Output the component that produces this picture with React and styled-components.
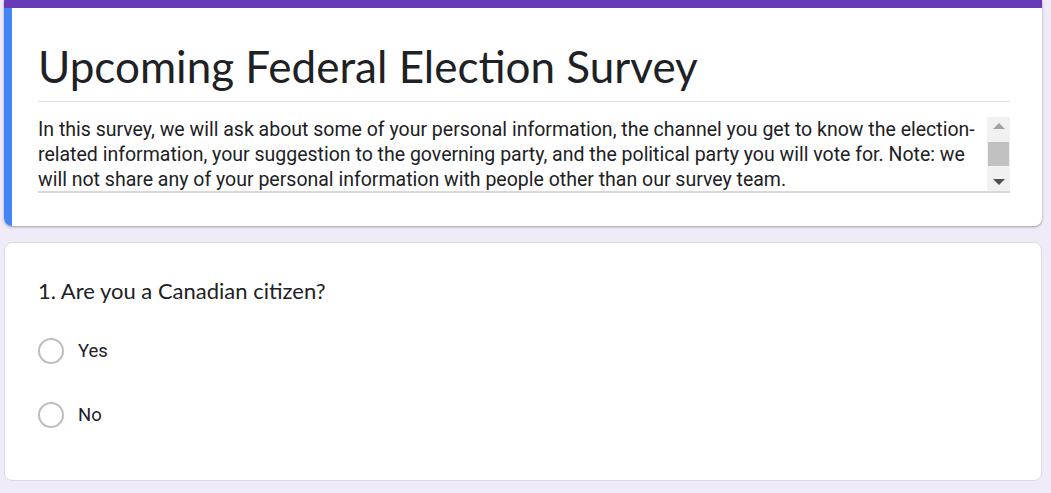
import React from "react";
import styled, { createGlobalStyle } from "styled-components";

const GlobalStyle = createGlobalStyle`
  html, body {
    margin: 0;
    padding: 0;
    background: #f0ebf8;
  }
  body {
    font-family: Roboto, "Liberation Sans", sans-serif;
    color: #202124;
  }
`;

const Page = styled.div`
  width: 1038px;
  padding: 0 0 0 4px;
  display: flex;
  flex-direction: column;
  gap: 16px;
`;

const HeaderCard = styled.div`
  background: #fff;
  border-radius: 0 0 8px 8px;
  border-top: 8px solid #673ab7;
  box-shadow: 0 1px 2px rgba(60, 64, 67, 0.35), 0 1px 3px 1px rgba(60, 64, 67, 0.1);
  display: flex;
  overflow: hidden;
`;

const Accent = styled.div`
  width: 8px;
  background: #4285f4;
  flex-shrink: 0;
`;

const HeaderBody = styled.div`
  flex: 1;
  padding: 30px 32px 33px 26px;
  display: flex;
  flex-direction: column;
`;

const Title = styled.h1`
  margin: 0;
  font-family: Lato, "Open Sans", sans-serif;
  font-weight: 400;
  font-size: 44px;
  line-height: 56px;
  color: #202124;
  padding-bottom: 7px;
  border-bottom: 1px solid #dadce0;
`;

const DescBox = styled.div`
  margin-top: 15px;
  display: flex;
  border-bottom: 2px solid #d9d9d9;
  height: 74px;
  overflow: hidden;
`;

const DescText = styled.p`
  flex: 1;
  margin: 0;
  font-size: 19.5px;
  line-height: 25px;
  color: #202124;
  padding-right: 8px;
`;

const Scrollbar = styled.div`
  width: 23px;
  background: #f1f1f1;
  display: flex;
  flex-direction: column;
  align-items: center;
  justify-content: space-between;
  padding: 6px 0 6px;
`;

const Thumb = styled.div`
  width: 21px;
  height: 24px;
  background: #c1c1c1;
`;

const Arrow = styled.div`
  width: 0;
  height: 0;
  border-left: 6px solid transparent;
  border-right: 6px solid transparent;
  ${(p) =>
    p.down
      ? "border-top: 6px solid #505050;"
      : "border-bottom: 6px solid #a3a3a3;"}
`;

const QuestionCard = styled.div`
  background: #fff;
  border: 1px solid #dadce0;
  border-radius: 8px;
  padding: 35px 33px 52px 33px;
  display: flex;
  flex-direction: column;
`;

const Question = styled.div`
  font-family: Lato, "Open Sans", sans-serif;
  font-size: 22px;
  line-height: 26px;
  color: #202124;
  margin-bottom: 34px;
`;

const Options = styled.div`
  display: flex;
  flex-direction: column;
  gap: 38px;
`;

const Option = styled.label`
  display: flex;
  align-items: center;
  gap: 14px;
  font-size: 18.5px;
  color: #202124;
`;

const Radio = styled.span`
  width: 22px;
  height: 22px;
  border: 2px solid #bdbdbd;
  border-radius: 50%;
`;

export default function App() {
  return (
    <>
      <GlobalStyle />
      <Page>
        <HeaderCard>
          <Accent />
          <HeaderBody>
            <Title>Upcoming Federal Election Survey</Title>
            <DescBox>
              <DescText>
                In this survey, we will ask about some of your personal information, the channel you get to know the election-related information, your suggestion to the governing party, and the political party you will vote for. Note: we will not share any of your personal information with people other than our survey team.
              </DescText>
              <Scrollbar>
                <Arrow />
                <Thumb />
                <Arrow down />
              </Scrollbar>
            </DescBox>
          </HeaderBody>
        </HeaderCard>
        <QuestionCard>
          <Question>1. Are you a Canadian citizen?</Question>
          <Options>
            <Option>
              <Radio />
              Yes
            </Option>
            <Option>
              <Radio />
              No
            </Option>
          </Options>
        </QuestionCard>
      </Page>
    </>
  );
}
